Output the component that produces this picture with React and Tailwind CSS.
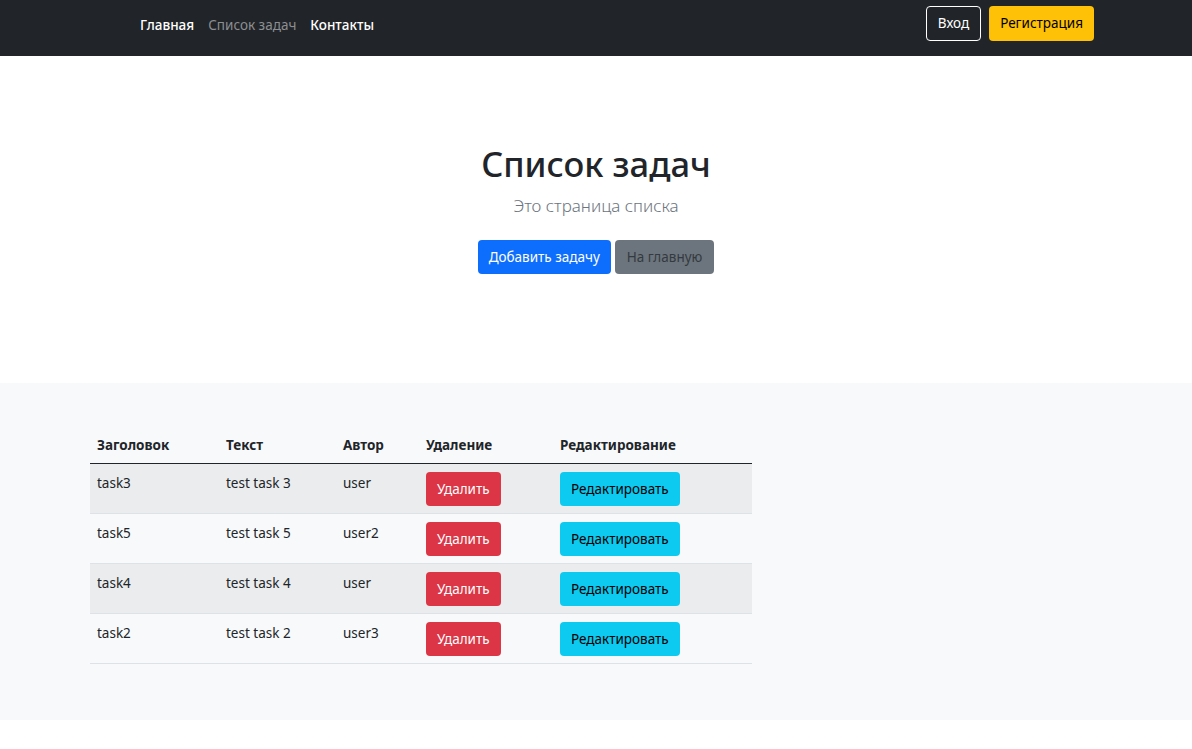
export default function App() {
  const rows = [
    ["task3", "test task 3", "user", true],
    ["task5", "test task 5", "user2", false],
    ["task4", "test task 4", "user", true],
    ["task2", "test task 2", "user3", false],
  ];
  const font = { fontFamily: '"Noto Sans", "Open Sans", sans-serif' };
  return (
    <div className="w-[1192px] min-h-[749px] bg-white text-[#212529] text-[13.5px]" style={font}>
      <nav className="h-[56px] bg-[#212529] flex items-start justify-between pt-[6px] pl-[133px] pr-[98px]">
        <div className="flex items-center h-[35px] pt-[3px]">
          <a className="px-[7px] text-white font-medium leading-[21px]">Главная</a>
          <a className="px-[7px] text-[#8c8e91] leading-[21px]">Список задач</a>
          <a className="px-[7px] text-white font-medium leading-[21px]">Контакты</a>
        </div>
        <div className="flex items-center gap-[8px]">
          <button className="h-[35px] px-[11px] border border-white rounded-[4px] text-white leading-[21px]">Вход</button>
          <button className="h-[35px] px-[11px] bg-[#ffc107] rounded-[4px] text-black leading-[21px]">Регистрация</button>
        </div>
      </nav>
      <section className="h-[327px] flex flex-col items-center pt-[87px]">
        <h1 className="text-[34.5px] font-medium leading-[42px] text-[#212529]">Список задач</h1>
        <p className="text-[17px] font-light leading-[27px] text-[#6c757d] mt-[7px]">Это страница списка</p>
        <div className="flex gap-[4px] mt-[21px]">
          <button className="h-[34px] px-[11px] bg-[#0d6efd] rounded-[4px] text-white">Добавить задачу</button>
          <button className="h-[34px] px-[12px] bg-[#6c757d] rounded-[4px] text-[#343a40]">На главную</button>
        </div>
      </section>
      <section className="bg-[#f8f9fa] pt-[45px] pb-[56px] pl-[90px]">
        <table className="w-[662px] border-collapse text-left">
          <thead>
            <tr className="border-b-[1.5px] border-[#212529]">
              <th className="w-[129px] px-[7px] py-[7px] leading-[21px] font-bold">Заголовок</th>
              <th className="w-[117px] px-[7px] py-[7px] leading-[21px] font-bold">Текст</th>
              <th className="w-[83px] px-[7px] py-[7px] leading-[21px] font-bold">Автор</th>
              <th className="w-[134px] px-[7px] py-[7px] leading-[21px] font-bold">Удаление</th>
              <th className="px-[7px] py-[7px] leading-[21px] font-bold">Редактирование</th>
            </tr>
          </thead>
          <tbody>
            {rows.map((r, i) => (
              <tr key={i} className={`border-b border-[#dee2e6] ${r[3] ? "bg-[#ebeced]" : ""}`}>
                <td className="px-[7px] pt-[8px] pb-[7px] align-top leading-[22px]">{r[0]}</td>
                <td className="px-[7px] pt-[8px] pb-[7px] align-top leading-[22px]">{r[1]}</td>
                <td className="px-[7px] pt-[8px] pb-[7px] align-top leading-[22px]">{r[2]}</td>
                <td className="px-[7px] pt-[8px] pb-[7px] align-top">
                  <button className="h-[34px] px-[11px] bg-[#dc3545] rounded-[4px] text-white">Удалить</button>
                </td>
                <td className="px-[7px] pt-[8px] pb-[7px] align-top">
                  <button className="h-[34px] px-[11px] bg-[#0dcaf0] rounded-[4px] text-black">Редактировать</button>
                </td>
              </tr>
            ))}
          </tbody>
        </table>
      </section>
    </div>
  );
}
